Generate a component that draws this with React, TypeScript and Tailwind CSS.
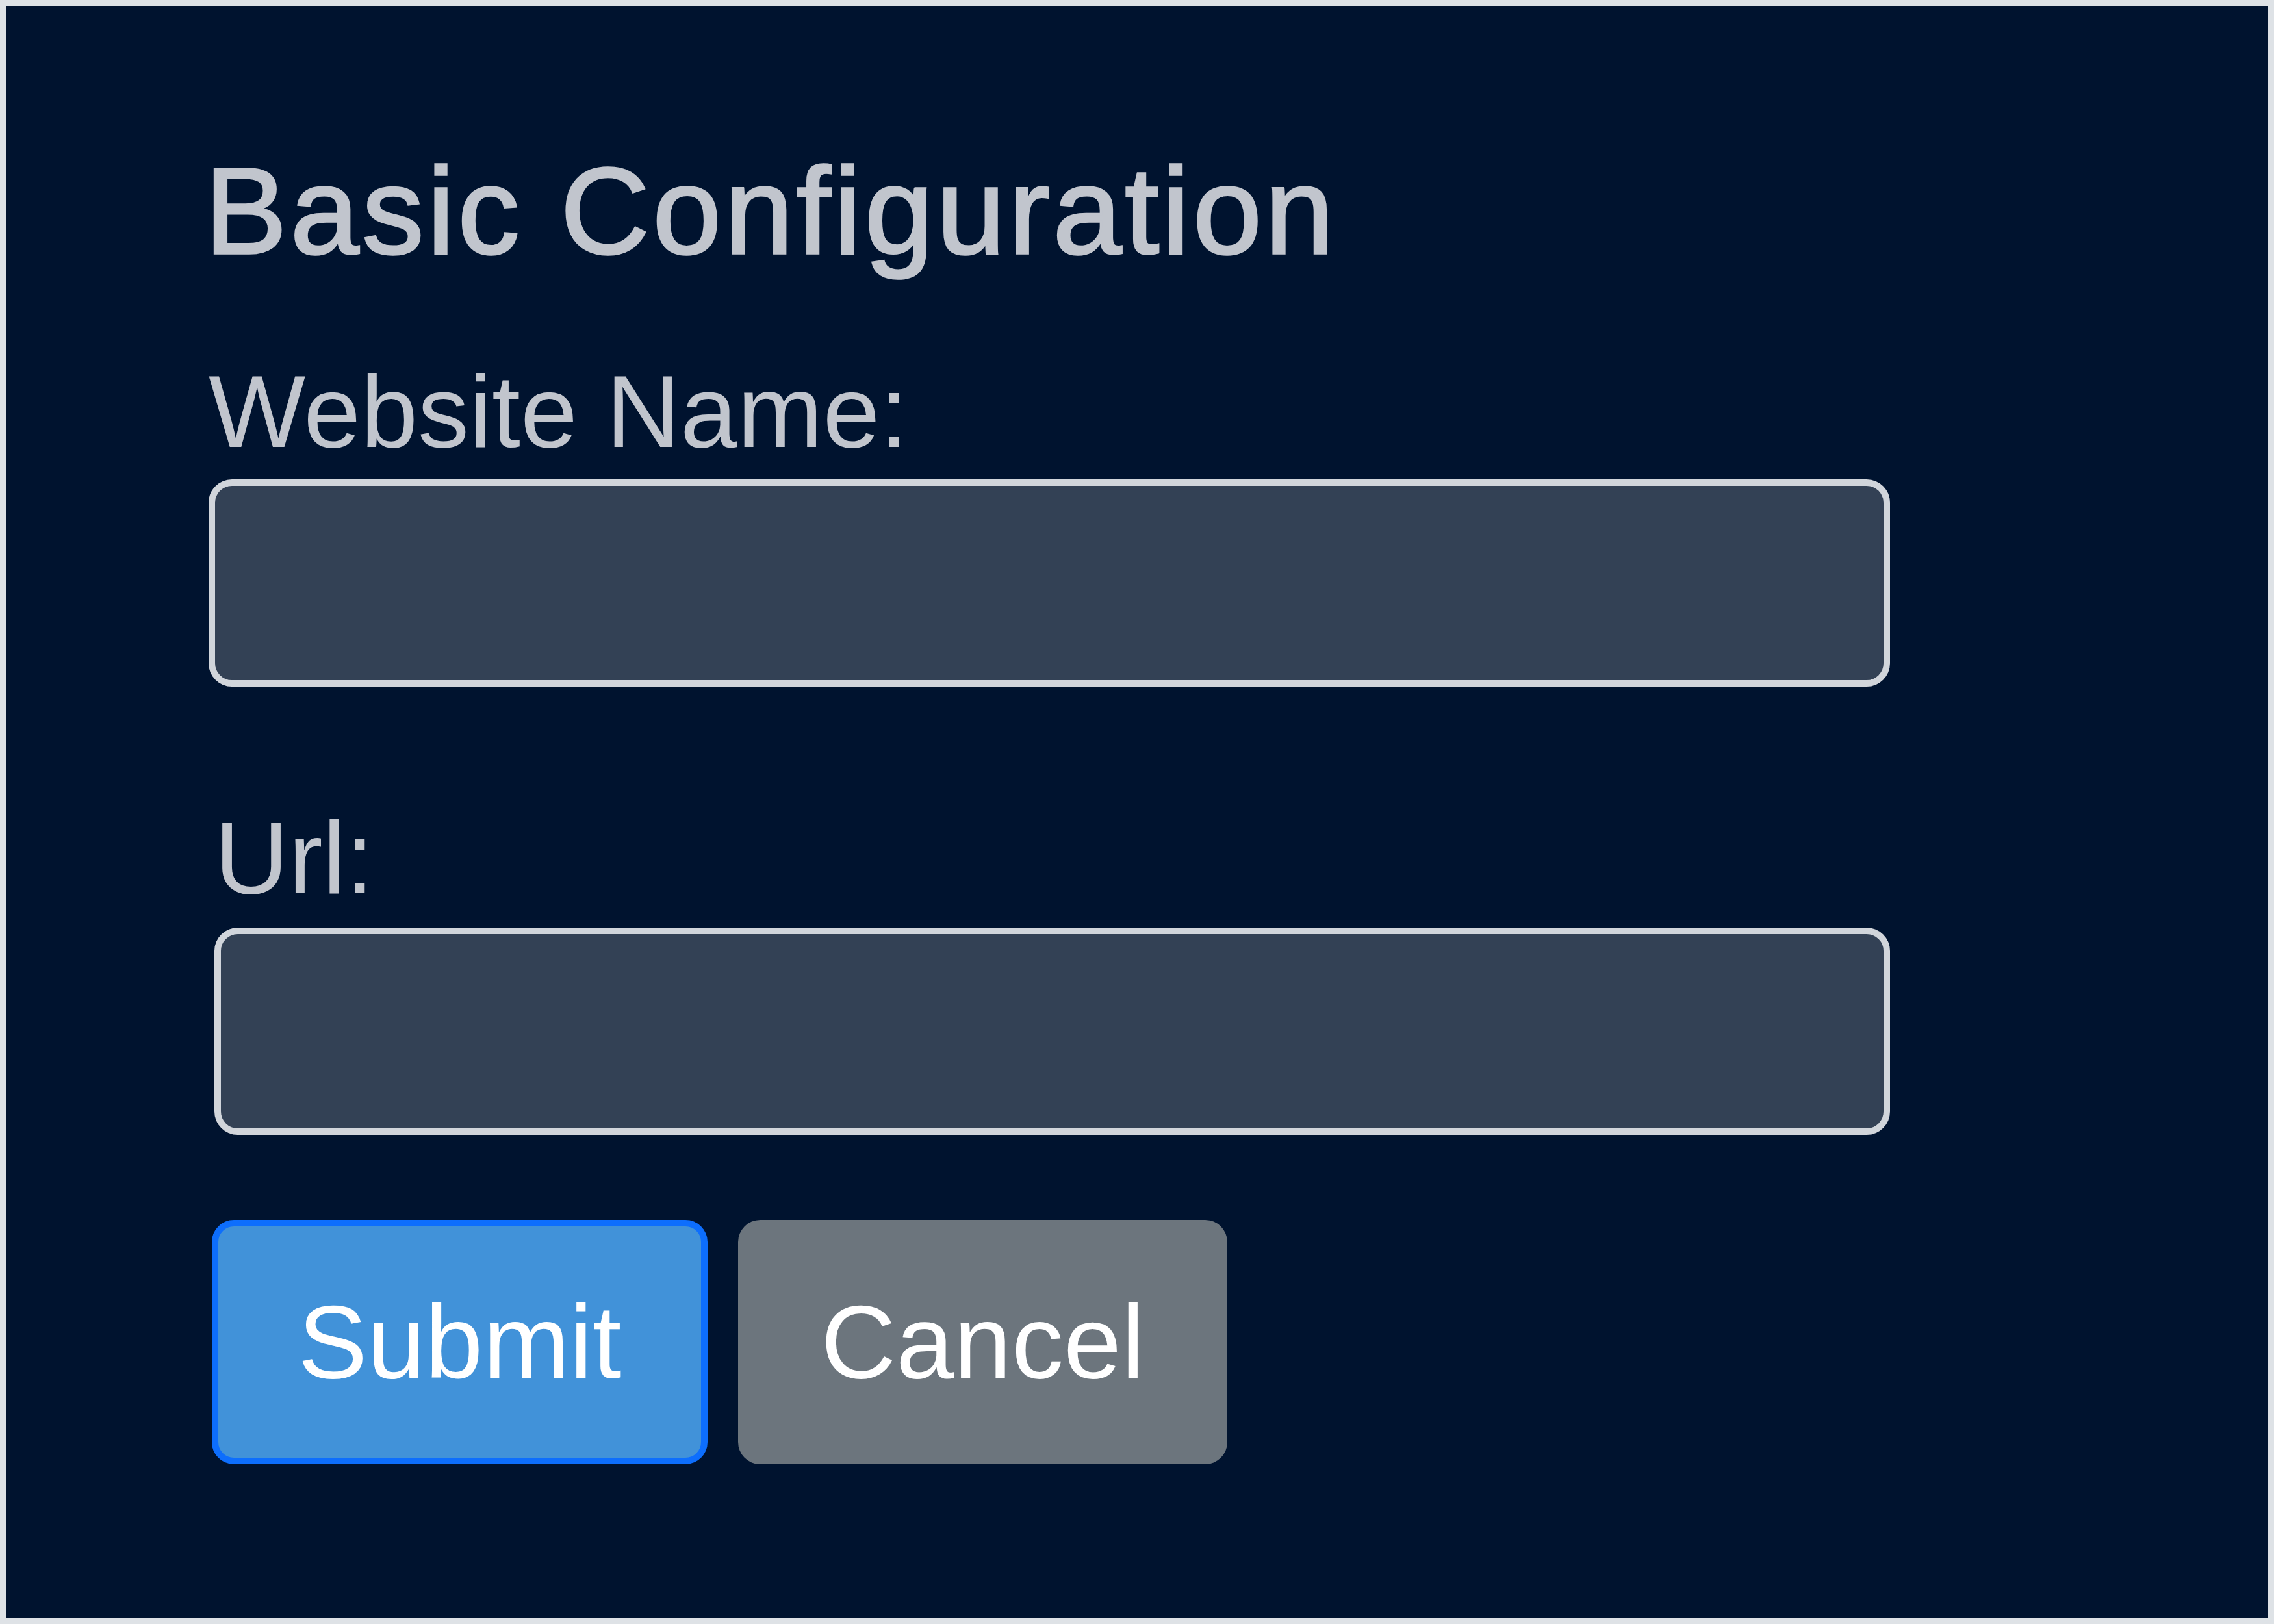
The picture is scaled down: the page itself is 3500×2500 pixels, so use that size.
import React from "react";

export default function App() {
  return (
    <div
      className="w-[3500px] h-[2500px] border-[10px] border-[#dee2e6] bg-[#00132f] pl-[311px] pt-[224px]"
      style={{ fontFamily: '"Liberation Sans", Arial, sans-serif' }}
    >
      <h2 className="-mt-[2px] mb-[2px] -ml-[6px] text-[190px] leading-[184px] font-normal tracking-[5px] text-[#c1c5cd] h-[184px] [-webkit-text-stroke:3.5px_#c1c5cd]">
        Basic Configuration
      </h2>

      <div className="mt-[138px] flex flex-col w-[2588px]">
        <label className="text-[158px] leading-[158px] text-[#c1c5cd] h-[158px]">
          Website Name:
        </label>
        <input
          type="text"
          className="mt-[26px] h-[319px] w-full rounded-[36px] border-[10px] border-[#d1d5db] bg-[#334155] outline-none"
        />
      </div>

      <div className="mt-[184px] ml-[9px] flex flex-col w-[2579px]">
        <label className="text-[158px] leading-[158px] text-[#c1c5cd] h-[158px]">
          Url:
        </label>
        <input
          type="text"
          className="mt-[29px] h-[319px] w-full rounded-[36px] border-[10px] border-[#d1d5db] bg-[#334155] outline-none"
        />
      </div>

      <div className="mt-[131px] ml-[5px] flex flex-row gap-[47px]">
        <button className="h-[376px] w-[763px] flex items-center justify-center rounded-[34px] border-[10px] border-[#0d6efd] bg-[#4192d9] text-white text-[160px] leading-none">
          Submit
        </button>
        <button className="h-[376px] w-[753px] flex items-center justify-center rounded-[34px] bg-[#6c757d] text-white text-[160px] leading-none">
          Cancel
        </button>
      </div>
    </div>
  );
}
